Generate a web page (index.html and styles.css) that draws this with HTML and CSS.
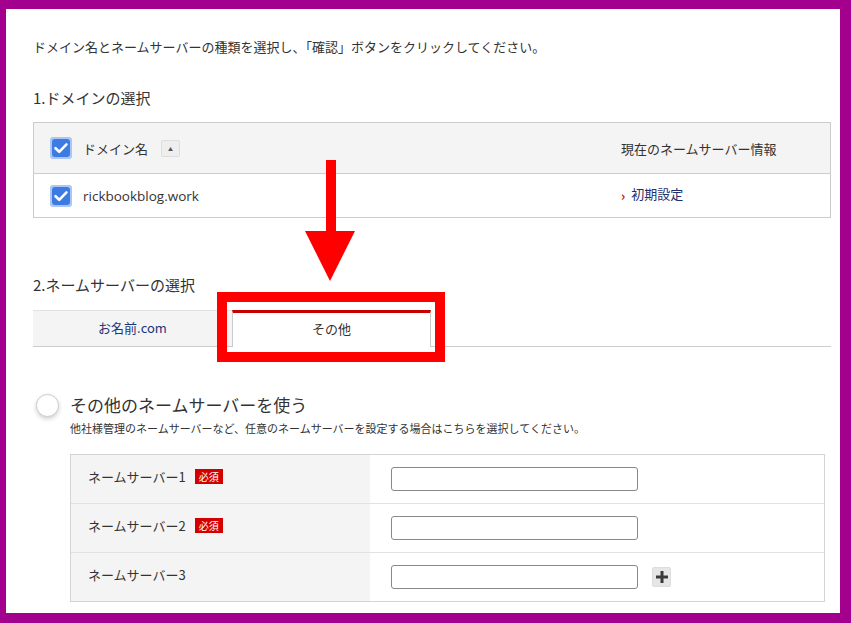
FILE: index.html
```html
<!DOCTYPE html>
<html lang="ja">
<head>
    <meta charset="UTF-8">
    <title>ネームサーバーの変更</title>
    <link rel="stylesheet" href="styles.css">
</head>
<body>

<div class="frame">
    <div class="panel">
        <p class="intro">ドメイン名とネームサーバーの種類を選択し、「確認」ボタンをクリックしてください。</p>

        <h2 class="step">1.ドメインの選択</h2>
        <div class="domain-table">
            <div class="domain-row domain-head">
                <div class="cell-name">
                    <span class="check">
                        <svg width="22" height="22" viewBox="0 0 22 22"><rect x="0" y="0" width="22" height="22" rx="3" fill="#a9c6f4"/><rect x="2" y="2" width="18" height="18" rx="3" fill="#3d7be3"/><path d="M5.5 11.2 L9.2 14.8 L16.5 7.4" fill="none" stroke="#fff" stroke-width="2.6" stroke-linecap="round" stroke-linejoin="round"/></svg>
                    </span>
                    <span>ドメイン名</span>
                    <span class="sort-btn">▲</span>
                </div>
                <div class="cell-ns">現在のネームサーバー情報</div>
            </div>
            <div class="domain-row">
                <div class="cell-name">
                    <span class="check">
                        <svg width="22" height="22" viewBox="0 0 22 22"><rect x="0" y="0" width="22" height="22" rx="3" fill="#a9c6f4"/><rect x="2" y="2" width="18" height="18" rx="3" fill="#3d7be3"/><path d="M5.5 11.2 L9.2 14.8 L16.5 7.4" fill="none" stroke="#fff" stroke-width="2.6" stroke-linecap="round" stroke-linejoin="round"/></svg>
                    </span>
                    <span class="domain-name">rickbookblog.work</span>
                </div>
                <div class="cell-ns"><span class="chev">›</span><span class="ns-link">初期設定</span></div>
            </div>
        </div>

        <h2 class="step step-2">2.ネームサーバーの選択</h2>
        <div class="tabs">
            <div class="tab">お名前.com</div>
            <div class="tab tab-active">その他</div>
        </div>

        <div class="other-ns">
            <div class="radio-title">
                <span class="radio"></span>
                <span>その他のネームサーバーを使う</span>
            </div>
            <p class="radio-note">他社様管理のネームサーバーなど、任意のネームサーバーを設定する場合はこちらを選択してください。</p>

            <div class="ns-table">
                <div class="ns-row">
                    <div class="ns-label">ネームサーバー1<span class="required">必須</span></div>
                    <div class="ns-field"><input type="text" class="ns-input"></div>
                </div>
                <div class="ns-row">
                    <div class="ns-label">ネームサーバー2<span class="required">必須</span></div>
                    <div class="ns-field"><input type="text" class="ns-input"></div>
                </div>
                <div class="ns-row">
                    <div class="ns-label">ネームサーバー3</div>
                    <div class="ns-field">
                        <input type="text" class="ns-input">
                        <span class="add-btn">
                            <svg width="12" height="12" viewBox="0 0 12 12"><rect x="4.5" y="0" width="3" height="12" fill="#3a3a3a"/><rect x="0" y="4.5" width="12" height="3" fill="#3a3a3a"/></svg>
                        </span>
                    </div>
                </div>
            </div>
        </div>

        <!-- annotation -->
        <svg class="arrow" width="50" height="121" viewBox="0 0 50 121">
            <rect x="21" y="0" width="10" height="74" fill="#f00"/>
            <polygon points="0,71 50,71 25,121" fill="#f00"/>
        </svg>
        <div class="highlight"></div>
    </div>
</div>

</body>
</html>
```

FILE: styles.css
```css
body {
    margin: 0;
    background-color: #a2008d;
    font-family: "Noto Sans CJK JP", "Noto Sans", sans-serif;
    color: #333;
}

.frame {
    padding: 9px 11px 10px 6px;
}

.panel {
    position: relative;
    background-color: #fff;
    height: 604px;
    overflow: hidden;
    padding: 28px 9px 0 27px;
    box-sizing: border-box;
}

.intro {
    margin: 0;
    font-size: 13px;
    line-height: 20px;
}

.step {
    margin: 30px 0 13px;
    font-size: 15px;
    font-weight: normal;
    line-height: 22px;
}

.step-2 {
    margin: 56px 0 14px;
}

.domain-table {
    border: 1px solid #ccc;
}

.domain-row {
    display: grid;
    grid-template-columns: 1fr 209px;
    align-items: center;
    height: 43px;
    padding-left: 16px;
    font-size: 13px;
}

.domain-head {
    height: 50px;
    background-color: #f4f4f4;
    border-bottom: 1px solid #ccc;
}

.cell-name {
    display: flex;
    align-items: center;
}

.cell-ns {
    display: flex;
    align-items: center;
}

.check {
    display: flex;
    margin-right: 11px;
}

.domain-name {
    font-family: "Open Sans", "Noto Sans", sans-serif;
    font-size: 13.5px;
}

.sort-btn {
    width: 17px;
    height: 15px;
    margin-left: 13px;
    border: 1px solid #ddd;
    border-radius: 2px;
    background-color: #eee;
    color: #555;
    font-size: 5px;
    line-height: 15px;
    text-align: center;
}

.chev {
    color: #d0021b;
    font-weight: bold;
    margin-right: 6px;
    line-height: 16px;
}

.ns-link {
    color: #1f2f6e;
    line-height: 16px;
    margin-bottom: 3px;
}

.tabs {
    display: flex;
    height: 37px;
    border-bottom: 1px solid #ccc;
    box-sizing: border-box;
}

.tab {
    width: 199px;
    background-color: #f4f4f4;
    border-top: 1px solid #e2e2e2;
    color: #23357a;
    font-size: 13px;
    line-height: 34px;
    text-align: center;
}

.tab-active {
    background-color: #fff;
    border-top: 3px solid #c90000;
    border-left: 1px solid #ccc;
    border-right: 1px solid #ccc;
    color: #333;
    line-height: 32px;
    height: 37px;
    box-sizing: border-box;
}

.other-ns {
    margin-top: 46px;
}

.radio-title {
    display: flex;
    align-items: center;
    font-size: 17px;
    line-height: 24px;
}

.radio {
    width: 23px;
    height: 23px;
    margin: 0 11px 0 3px;
    border: 1px solid #ccc;
    border-radius: 50%;
    background-color: #fff;
    box-shadow: 0 2px 4px rgba(0, 0, 0, 0.18);
    box-sizing: border-box;
}

.radio-note {
    margin: 3px 0 0 37px;
    font-size: 11px;
    line-height: 16px;
}

.ns-table {
    width: 753px;
    margin: 18px 0 0 37px;
    border: 1px solid #d4d4d4;
}

.ns-row {
    display: grid;
    grid-template-columns: 299px 1fr;
    height: 48px;
    border-bottom: 1px solid #e2e2e2;
}

.ns-row:last-child {
    border-bottom: none;
}

.ns-label {
    display: flex;
    align-items: center;
    padding: 0 0 6px 17px;
    background-color: #f4f4f4;
    font-size: 13px;
}

.required {
    margin-left: 9px;
    padding: 0 4px;
    background-color: #d40000;
    color: #fff;
    font-size: 10px;
    line-height: 15px;
}

.ns-field {
    display: flex;
    align-items: center;
    padding: 0 0 0 21px;
}

.ns-input {
    width: 247px;
    height: 24px;
    box-sizing: border-box;
    border: 1px solid #888;
    border-radius: 3px;
}

.add-btn {
    display: flex;
    align-items: center;
    justify-content: center;
    width: 19px;
    height: 20px;
    margin-left: 14px;
    background-color: #e6e6e6;
    border: 1px solid #ddd;
    border-radius: 2px;
    box-sizing: border-box;
}

.arrow {
    position: absolute;
    left: 299px;
    top: 151px;
}

.highlight {
    position: absolute;
    left: 211px;
    top: 283px;
    width: 228px;
    height: 70px;
    border: 10px solid #f00;
    box-sizing: border-box;
}
```
